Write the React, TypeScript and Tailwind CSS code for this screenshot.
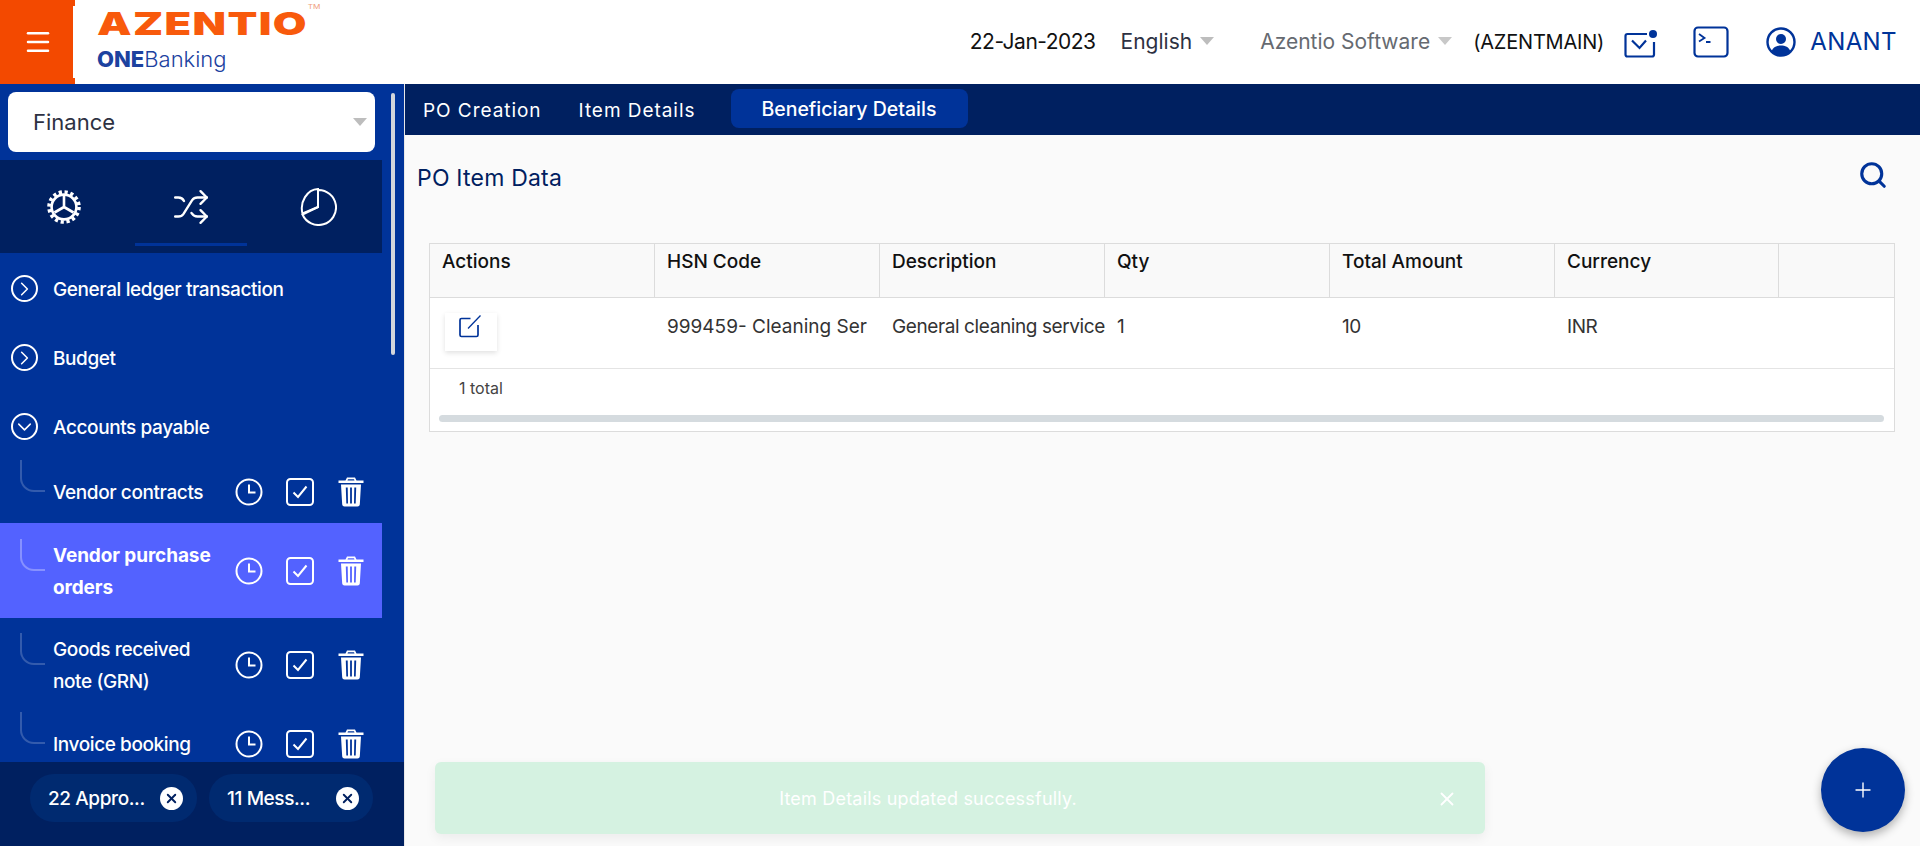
import React from 'react';
import { ChevronDown, ChevronRight, Menu, Plus, Search, Shuffle, X } from 'lucide-react';

const font = { fontFamily: 'Inter, "Liberation Sans", sans-serif' };

const Caret = ({ className = 'border-t-[#bdbdbd]' }: { className?: string }) => (
  <span className={`block w-0 h-0 border-x-[7.5px] border-x-transparent border-t-[8px] ${className}`} />
);

const GearIcon = () => (
  <svg width="36" height="36" viewBox="0 0 36 36" fill="none" stroke="white">
    <circle cx="18" cy="18" r="15" strokeWidth="3.6" strokeDasharray="3.2 2.7" />
    <circle cx="18" cy="18" r="12.4" strokeWidth="2.6" />
    <path d="M18 18L18 7M18 18L8.5 23.5M18 18L27.5 23.5" strokeWidth="2.6" />
  </svg>
);

const PieIcon = () => (
  <svg width="38" height="38" viewBox="0 0 38 38" fill="none" stroke="white" strokeWidth="2">
    <path d="M19 2a17.500 17.500 0 1 1-15.500 24.500L19 19z" />
    <path d="M19 1V19L3.500 25.500C.5 14 8 1.500 19 1z" />
  </svg>
);

const RoundChevron = ({ open }: { open?: boolean }) => (
  <span className="w-[27px] h-[27px] rounded-full border-2 border-white flex items-center justify-center shrink-0">
    {open ? <ChevronDown size={24} strokeWidth={1.6} /> : <ChevronRight size={24} strokeWidth={1.6} />}
  </span>
);

const ClockIcon = () => (
  <svg width="28" height="28" viewBox="0 0 28 28" fill="none" stroke="white" strokeWidth="2">
    <circle cx="14" cy="14" r="12.5" />
    <path d="M14 6.500V14.500H20.500" />
  </svg>
);

const CheckBoxIcon = () => (
  <svg width="28" height="28" viewBox="0 0 28 28" fill="none" stroke="white" strokeWidth="2">
    <rect x="1" y="1" width="26" height="26" rx="3.500" />
    <path d="M7.500 14.500L12 19L20.500 8.500" />
  </svg>
);

const TrashIcon = () => (
  <svg width="26" height="30" viewBox="0 0 26 30">
    <path
      fill="white"
      fillRule="evenodd"
      d="M9 0.500H17L18.500 3.500H25.500V6H0.500V3.500H7.500ZM10 2.200L9.500 3.500H16.500L16 2.200ZM3 7.500H23L21.800 27.500Q21.600 29.500 19.500 29.500H6.500Q4.400 29.500 4.200 27.500ZM7.800 10.500L8.300 26.500H10L9.700 10.500ZM12.100 10.500V26.500H13.900V10.500ZM16.300 10.500L16 26.500H17.700L18.200 10.500Z"
    />
  </svg>
);

const MailIcon = () => (
  <svg width="34" height="30" viewBox="0 0 34 30" fill="none" stroke="#003399" strokeWidth="2.200">
    <path d="M23 5H3.500A2 2 0 0 0 1.500 7V25.500A2 2 0 0 0 3.500 27.500H28A2 2 0 0 0 30 25.500V13" />
    <path d="M8 11.500L15.500 19L22 11.500" />
    <circle cx="29" cy="5" r="4" fill="#003399" stroke="none" />
  </svg>
);

const TerminalIcon = () => (
  <svg width="36" height="32" viewBox="0 0 36 32" fill="none" stroke="#003399" strokeWidth="2.200">
    <rect x="1.500" y="1.500" width="33" height="29" rx="3.500" />
    <path d="M6 8L11.500 12L6 15.500M13 16H17.500" strokeWidth="1.800" />
  </svg>
);

const UserIcon = () => (
  <svg width="30" height="30" viewBox="0 0 30 30" fill="none">
    <circle cx="15" cy="15" r="13.500" stroke="#003399" strokeWidth="2.400" />
    <circle cx="15" cy="12" r="5" fill="#003399" />
    <path d="M5.500 24.500C7 20 11 18.500 15 18.500S23 20 24.500 24.500A13 13 0 0 1 5.500 24.500Z" fill="#003399" />
  </svg>
);

const EditIcon = () => (
  <svg width="24" height="24" viewBox="0 0 24 24" fill="none" stroke="#003399" strokeWidth="1.700">
    <path d="M12.500 4.500H3.500A1.500 1.500 0 0 0 2 6V21A1.500 1.500 0 0 0 3.500 22.500H18.500A1.500 1.500 0 0 0 20 21V11" />
    <path d="M10 14.500L22.500 1.500" strokeWidth="1.300" />
  </svg>
);

const subItems = [
  { label: ['Vendor contracts'], h: 'h-[62px]' },
  { label: ['Vendor purchase', 'orders'], h: 'h-[95px]', active: true },
  { label: ['Goods received', 'note (GRN)'], h: 'h-[94px]' },
  { label: ['Invoice booking'], h: 'h-[64px]' },
];

const columns = ['Actions', 'HSN Code', 'Description', 'Qty', 'Total Amount', 'Currency', ''];

const Sidebar = () => (
  <aside className="w-[405px] shrink-0 bg-[#003399] border-r border-[#e8e8e8] flex flex-col relative text-white overflow-hidden">
    <div className="absolute right-[9px] top-[9px] w-[4px] h-[262px] rounded-full bg-[#d3d6dc]" />
    <div className="pl-2 pr-[29px] pt-2">
      <div className="h-[60px] bg-white rounded-lg flex items-center justify-between pl-[25px] pr-2 text-[22px] text-[#2d3142]">
        <span>Finance</span>
        <Caret />
      </div>
    </div>
    <div className="mt-2 mr-[22px] h-[93px] bg-[#002060] flex items-start shrink-0">
      <div className="flex-1 h-[86px] flex items-center justify-center pt-2 pr-[7px]"><GearIcon /></div>
      <div className="w-[112px] h-[86px] flex items-center justify-center border-b-[3px] border-[#003399] pt-[10px]">
        <Shuffle size={38} strokeWidth={1.5} />
      </div>
      <div className="flex-1 h-[86px] flex items-center justify-center pt-2 pl-[7px]"><PieIcon /></div>
    </div>
    <nav className="flex-1 overflow-hidden text-[19px] leading-[32px] tracking-[-0.4px] mr-[22px]">
      {['General ledger transaction', 'Budget', 'Accounts payable'].map((t, i) => (
        <div key={t} className="h-[69px] flex items-center gap-[15px] pl-[11px] first:mt-[1px]">
          <RoundChevron open={i === 2} />
          <span className="font-medium mt-[2px]">{t}</span>
        </div>
      ))}
      {subItems.map((s) => (
        <div key={s.label[0]} className={`${s.h} relative flex items-center pl-[53px] pr-[18px] ${s.active ? 'bg-[#5362ff] font-bold tracking-[-0.1px]' : 'font-medium'}`}>
          <span className={`absolute left-[20px] bottom-1/2 w-[25px] h-[32px] border-l-2 border-b-2 rounded-bl-[14px] ${s.active ? 'border-white/30' : 'border-white/20'}`} />
          <div className={`flex-1 ${s.active ? 'mt-[3px]' : 'mt-[2px]'}`}>
            {s.label.map((l) => <div key={l}>{l}</div>)}
          </div>
          <div className="flex items-center gap-[23px]">
            <ClockIcon />
            <CheckBoxIcon />
            <span className="ml-[1px]"><TrashIcon /></span>
          </div>
        </div>
      ))}
    </nav>
    <div className="h-[84px] shrink-0 bg-[#002060] flex items-start gap-3 pl-[30px] pt-3 text-[19px] tracking-[-0.4px]">
      <div className="w-[167px] h-[48px] rounded-full bg-[#002a70] flex items-center justify-between pl-[18px] pr-[14px]">
        <span className="font-medium mt-[2px]">22 Appro...</span>
        <span className="w-[23px] h-[23px] rounded-full bg-white flex items-center justify-center"><X size={15} strokeWidth={3} color="#002060" /></span>
      </div>
      <div className="w-[164px] h-[48px] rounded-full bg-[#002a70] flex items-center justify-between pl-[18px] pr-[14px]">
        <span className="font-medium mt-[2px]">11 Mess...</span>
        <span className="w-[23px] h-[23px] rounded-full bg-white flex items-center justify-center"><X size={15} strokeWidth={3} color="#002060" /></span>
      </div>
    </div>
  </aside>
);

const Header = () => (
  <header className="h-[84px] shrink-0 bg-white flex items-center">
    <div className="w-[75px] h-full bg-[#f34900] flex items-center justify-center relative">
      <Menu size={30} color="white" strokeWidth={2} />
      <span className="absolute right-0 top-[6px] bottom-[6px] w-[2px] bg-white" />
    </div>
    <div className="ml-[22px] flex flex-col">
      <div className="text-[32px] leading-[28px] font-black text-[#f85a0c] tracking-[1px] origin-left scale-x-[1.36] whitespace-nowrap">
        AZENTIO<sup className="text-[6px] font-normal text-[#f0a080] tracking-normal align-top">TM</sup>
      </div>
      <div className="text-[22px] leading-[30px] mt-[6px] text-[#1c429f]">
        <span className="font-extrabold">ONE</span>
        <span className="font-light">Banking</span>
      </div>
    </div>
    <div className="ml-auto flex items-center pr-[23px] text-[21px]">
      <span className="text-[#111] tracking-[-0.5px]">22-Jan-2023</span>
      <span className="ml-[25px] text-[#2d3142]">English</span>
      <span className="ml-2 -mt-[3px]"><Caret /></span>
      <span className="ml-[46px] text-[#666a70]">Azentio Software</span>
      <span className="ml-2 -mt-[3px]"><Caret className="border-t-[#c8c8c8]" /></span>
      <span className="ml-[21px] text-[20px] text-[#111] tracking-[-0.2px]">(AZENTMAIN)</span>
      <span className="ml-[20px] mt-[3px]"><MailIcon /></span>
      <span className="ml-[35px]"><TerminalIcon /></span>
      <span className="ml-[37px]"><UserIcon /></span>
      <span className="ml-[14px] text-[#003399] text-[24px] tracking-[0.4px]">ANANT</span>
    </div>
  </header>
);

export default function App() {
  return (
    <div className="w-[1920px] h-[846px] overflow-hidden flex flex-col bg-[#fafafa] relative" style={font}>
      <Header />
      <div className="flex-1 flex min-h-0">
        <Sidebar />
        <main className="flex-1 min-w-0 flex flex-col">
          <div className="h-[51px] bg-[#002060] flex items-start text-white text-[19px] pl-[18px] shrink-0">
            <span className="mt-[13px] tracking-[0.95px]">PO Creation</span>
            <span className="ml-[37px] mt-[13px] tracking-[0.95px]">Item Details</span>
            <span className="ml-[36px] mt-[5px] w-[237px] h-[39px] rounded-lg bg-[#003399] flex items-center justify-center font-medium text-[19.5px] pt-[2px] pr-[2px]">Beneficiary Details</span>
          </div>
          <div className="flex items-center justify-between pl-3 pr-[32px] pt-[24px]">
            <h1 className="text-[23px] leading-[38px] text-[#002060] tracking-[0.2px]">PO Item Data</h1>
            <Search size={30} color="#003399" strokeWidth={2.5} className="-mt-[7px]" />
          </div>
          <div className="mt-[46px] ml-[24px] mr-[25px] border border-[#dcdcdc] bg-white">
            <div className="h-[54px] grid grid-cols-[225px_225px_225px_225px_225px_224px_1fr] bg-[#f9f9f9] border-b border-[#dcdcdc] text-[19px] font-medium text-[#111]">
              {columns.map((c, i) => (
                <div key={i} className="pl-3 pt-[4px] leading-[28px] border-r border-[#dcdcdc] last:border-r-0">{c}</div>
              ))}
            </div>
            <div className="h-[71px] grid grid-cols-[225px_225px_225px_225px_225px_224px_1fr] border-b border-[#e4e4e4] text-[19px] tracking-[-0.4px] text-[#333] items-center">
              <div className="pl-[15px]">
                <span className="w-[52px] h-[38px] bg-white shadow-[0_2px_5px_rgba(0,0,0,0.12)] flex items-start justify-center -mt-[3px] pt-[1px] pr-[2px]">
                  <EditIcon />
                </span>
              </div>
              <div className="pl-3 -mt-[12px] whitespace-nowrap overflow-hidden tracking-normal">999459- Cleaning Ser</div>
              <div className="pl-3 -mt-[12px] whitespace-nowrap">General cleaning service</div>
              <div className="pl-3 -mt-[12px]">1</div>
              <div className="pl-3 -mt-[12px]">10</div>
              <div className="pl-3 -mt-[12px]">INR</div>
              <div />
            </div>
            <div className="h-[46px] pl-[29px] pt-[7px] text-[16px] leading-[24px] text-[#444]">1 total</div>
            <div className="ml-[9px] mr-[10px] mb-[9px] h-[7px] rounded-full bg-[#d5dbdf]" />
          </div>
        </main>
      </div>
      {/* toast + fab sit over the page */}
      <div className="absolute left-[435px] top-[762px] w-[1050px] h-[72px] rounded-md bg-[#d5f2e1] shadow-[0_4px_12px_rgba(0,0,0,0.06)] flex items-center justify-center text-[18px] tracking-[0.2px] text-white pr-[64px]">
        Item Details updated successfully.
        <X size={22} color="white" strokeWidth={2} className="absolute right-[27px] top-[26px]" />
      </div>
      <div className="absolute left-[1821px] top-[748px] w-[84px] h-[84px] rounded-full bg-[#003399] shadow-[0_4px_10px_rgba(0,0,0,0.3)] flex items-center justify-center">
        <Plus size={24} color="white" strokeWidth={1.4} />
      </div>
    </div>
  );
}
